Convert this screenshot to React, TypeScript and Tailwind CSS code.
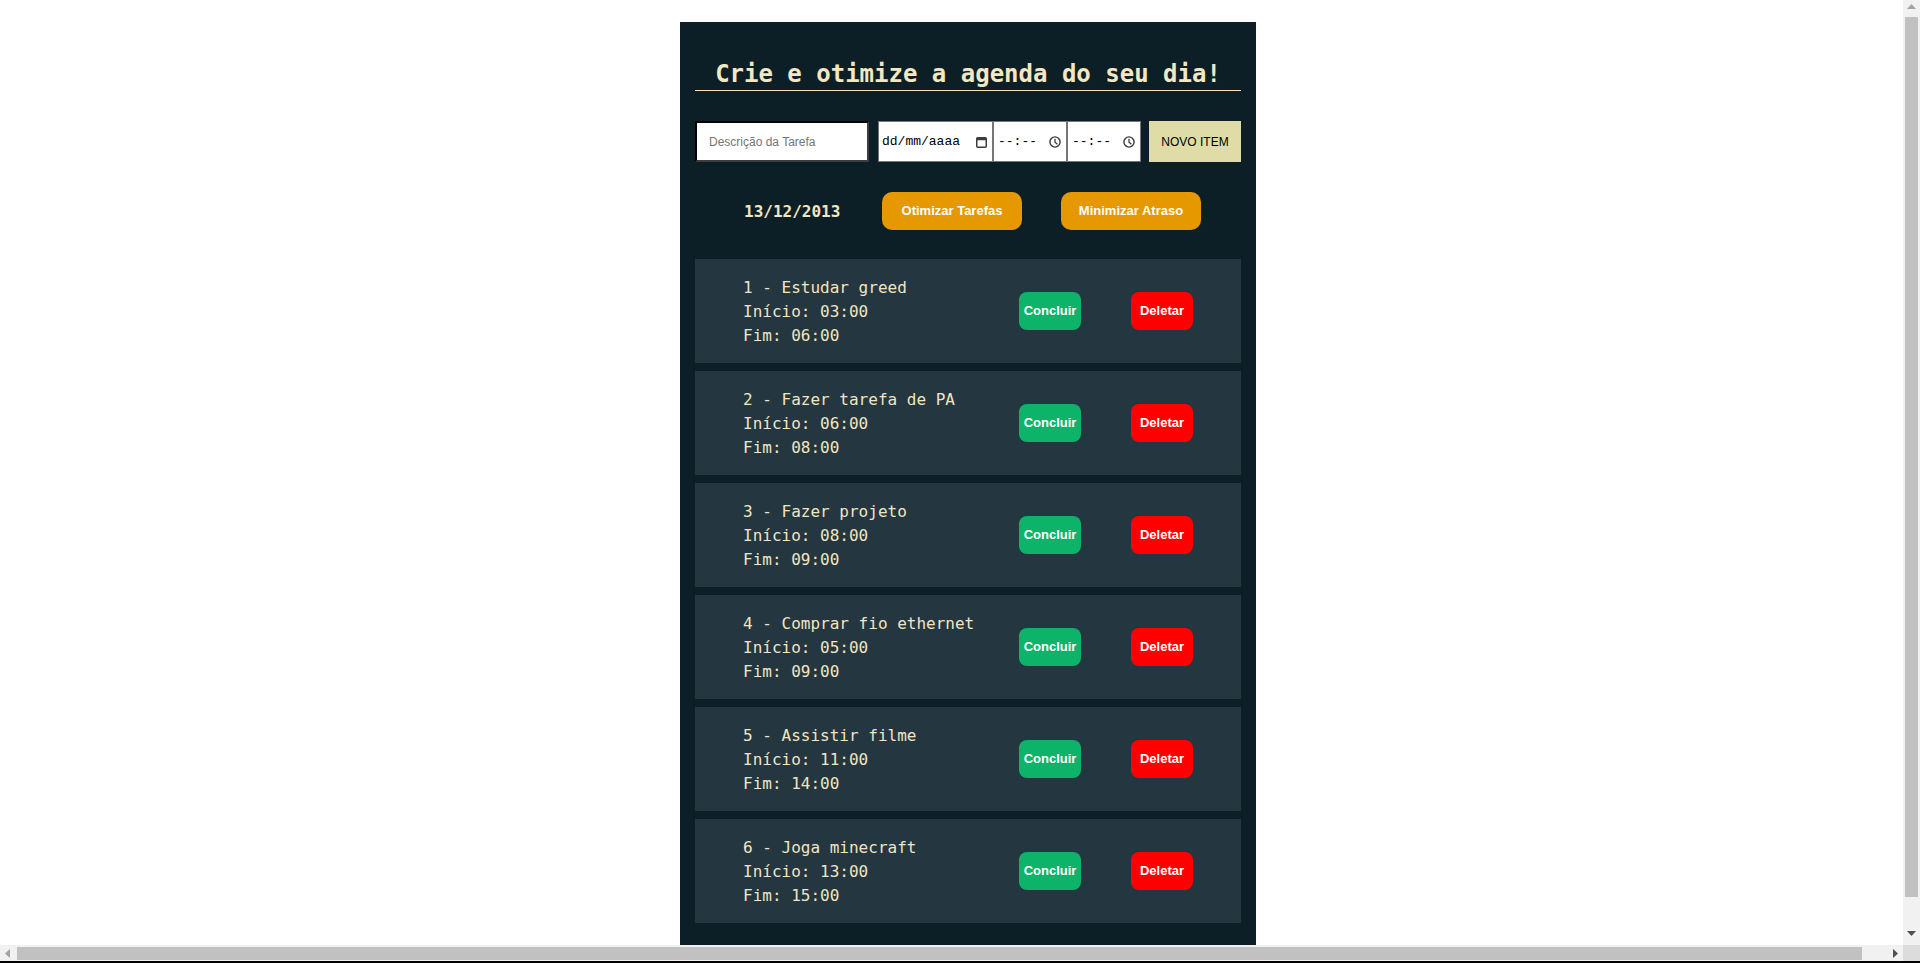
import React from "react";

type Task = { id: number; title: string; start: string; end: string };

const tasks: Task[] = [
  { id: 1, title: "Estudar greed", start: "03:00", end: "06:00" },
  { id: 2, title: "Fazer tarefa de PA", start: "06:00", end: "08:00" },
  { id: 3, title: "Fazer projeto", start: "08:00", end: "09:00" },
  { id: 4, title: "Comprar fio ethernet", start: "05:00", end: "09:00" },
  { id: 5, title: "Assistir filme", start: "11:00", end: "14:00" },
  { id: 6, title: "Joga minecraft", start: "13:00", end: "15:00" },
];

const CalendarIcon = () => (
  <svg width="11" height="12" viewBox="0 0 11 12" fill="none">
    <rect x="0.75" y="1.75" width="9.5" height="9.5" rx="1" stroke="#3c3c3c" strokeWidth="1.5" />
    <rect x="0.75" y="1.75" width="9.5" height="2.5" fill="#3c3c3c" />
  </svg>
);

const ClockIcon = () => (
  <svg width="12" height="12" viewBox="0 0 12 12" fill="none">
    <circle cx="6" cy="6" r="5.1" stroke="#3c3c3c" strokeWidth="1.4" />
    <path d="M6 2.8V6.2L8.4 8.2" stroke="#3c3c3c" strokeWidth="1.3" />
  </svg>
);

const TimeField = () => (
  <div className="flex w-[74px] items-center justify-between border border-[#767676] bg-white pl-[4px] pr-[5px]">
    <span className="font-['Liberation_Mono',monospace] text-[13px] text-black">--:--</span>
    <ClockIcon />
  </div>
);

const TaskCard = ({ task }: { task: Task }) => (
  <div className="flex h-[104px] items-center bg-[#243640] pl-[48px] pr-[48px]">
    <div className="flex-1 pt-[2px] text-[16px] leading-[24px] text-[#f1e5c2]">
      <p>
        {task.id} - {task.title}
      </p>
      <p>Início: {task.start}</p>
      <p>Fim: {task.end}</p>
    </div>
    <div className="flex items-center gap-[50px] font-['Liberation_Sans',Arial,sans-serif] text-[13px] font-bold text-white">
      <button className="h-[38px] w-[62px] rounded-[8px] bg-[#0eb36a]">Concluir</button>
      <button className="h-[38px] w-[62px] rounded-[8px] bg-[#ff0000]">Deletar</button>
    </div>
  </div>
);

// fake browser scrollbars seen in the screenshot
const Scrollbars = () => (
  <>
    <div className="fixed top-0 right-0 flex h-[945px] w-[17px] flex-col items-center bg-[#f1f1f1]">
      <svg width="9" height="5" viewBox="0 0 9 5" className="mt-[4px]">
        <path d="M0 5L4.5 0L9 5Z" fill="#a3a3a3" />
      </svg>
      <div className="mt-[8px] h-[880px] w-[13px] bg-[#c1c1c1]" />
      <svg width="9" height="5" viewBox="0 0 9 5" className="mt-[34px]">
        <path d="M0 0L4.5 5L9 0Z" fill="#505050" />
      </svg>
    </div>
    <div className="fixed bottom-[2px] left-0 flex h-[16px] w-[1903px] items-center bg-[#f1f1f1]">
      <svg width="5" height="9" viewBox="0 0 5 9" className="ml-[5px]">
        <path d="M5 0L0 4.5L5 9Z" fill="#a3a3a3" />
      </svg>
      <div className="ml-[7px] h-[13px] w-[1845px] bg-[#c1c1c1]" />
      <svg width="5" height="9" viewBox="0 0 5 9" className="ml-[31px]">
        <path d="M0 0L5 4.5L0 9Z" fill="#505050" />
      </svg>
    </div>
    <div className="fixed right-0 bottom-[2px] h-[16px] w-[17px] bg-[#dcdcdc]" />
    <div className="fixed bottom-0 left-0 h-[2px] w-full bg-black" />
  </>
);

export default function App() {
  return (
    <div className="m-2 flow-root w-screen font-['DejaVu_Sans_Mono',monospace]">
      <div className="mx-auto mt-[14px] w-[576px] bg-[#0d1f26] px-[15px] pt-[38px] pb-[30px]">
        <h1 className="border-b border-[#f1e5c2] pb-[2px] text-center text-[24px] leading-[28px] font-bold text-[#f4e8c4]">
          Crie e otimize a agenda do seu dia!
        </h1>

        <div className="mt-[30px] flex h-[41px]">
          <div className="flex w-[174px] items-center border-2 border-t-black border-l-black border-r-[#3d3d3d] border-b-[#3d3d3d] bg-white pl-[12px]">
            <span className="font-['Liberation_Sans',Arial,sans-serif] text-[12px] text-[#757575]">
              Descrição da Tarefa
            </span>
          </div>
          <div className="ml-[9px] flex w-[115px] items-center justify-between border border-[#767676] bg-white pl-[3px] pr-[5px]">
            <span className="font-['Liberation_Mono',monospace] text-[13px] text-black">dd/mm/aaaa</span>
            <CalendarIcon />
          </div>
          <TimeField />
          <TimeField />
          <button className="ml-[8px] w-[92px] bg-[#e0dca7] font-['Liberation_Sans',Arial,sans-serif] text-[12px] text-black">
            NOVO ITEM
          </button>
        </div>

        <div className="mt-[30px] flex h-[38px] items-center gap-[39px] pl-[49px]">
          <span className="w-[99px] pt-[1px] text-[16px] font-bold text-[#f1e5c2]">13/12/2013</span>
          <div className="flex gap-[39px] font-['Liberation_Sans',Arial,sans-serif] text-[13px] font-bold text-white">
            <button className="h-[38px] w-[140px] rounded-[10px] bg-[#e69800]">Otimizar Tarefas</button>
            <button className="h-[38px] w-[140px] rounded-[10px] bg-[#e69800]">Minimizar Atraso</button>
          </div>
        </div>

        <div className="mt-[29px] flex flex-col gap-[8px]">
          {tasks.map((t) => (
            <TaskCard key={t.id} task={t} />
          ))}
        </div>
      </div>
      <Scrollbars />
    </div>
  );
}
